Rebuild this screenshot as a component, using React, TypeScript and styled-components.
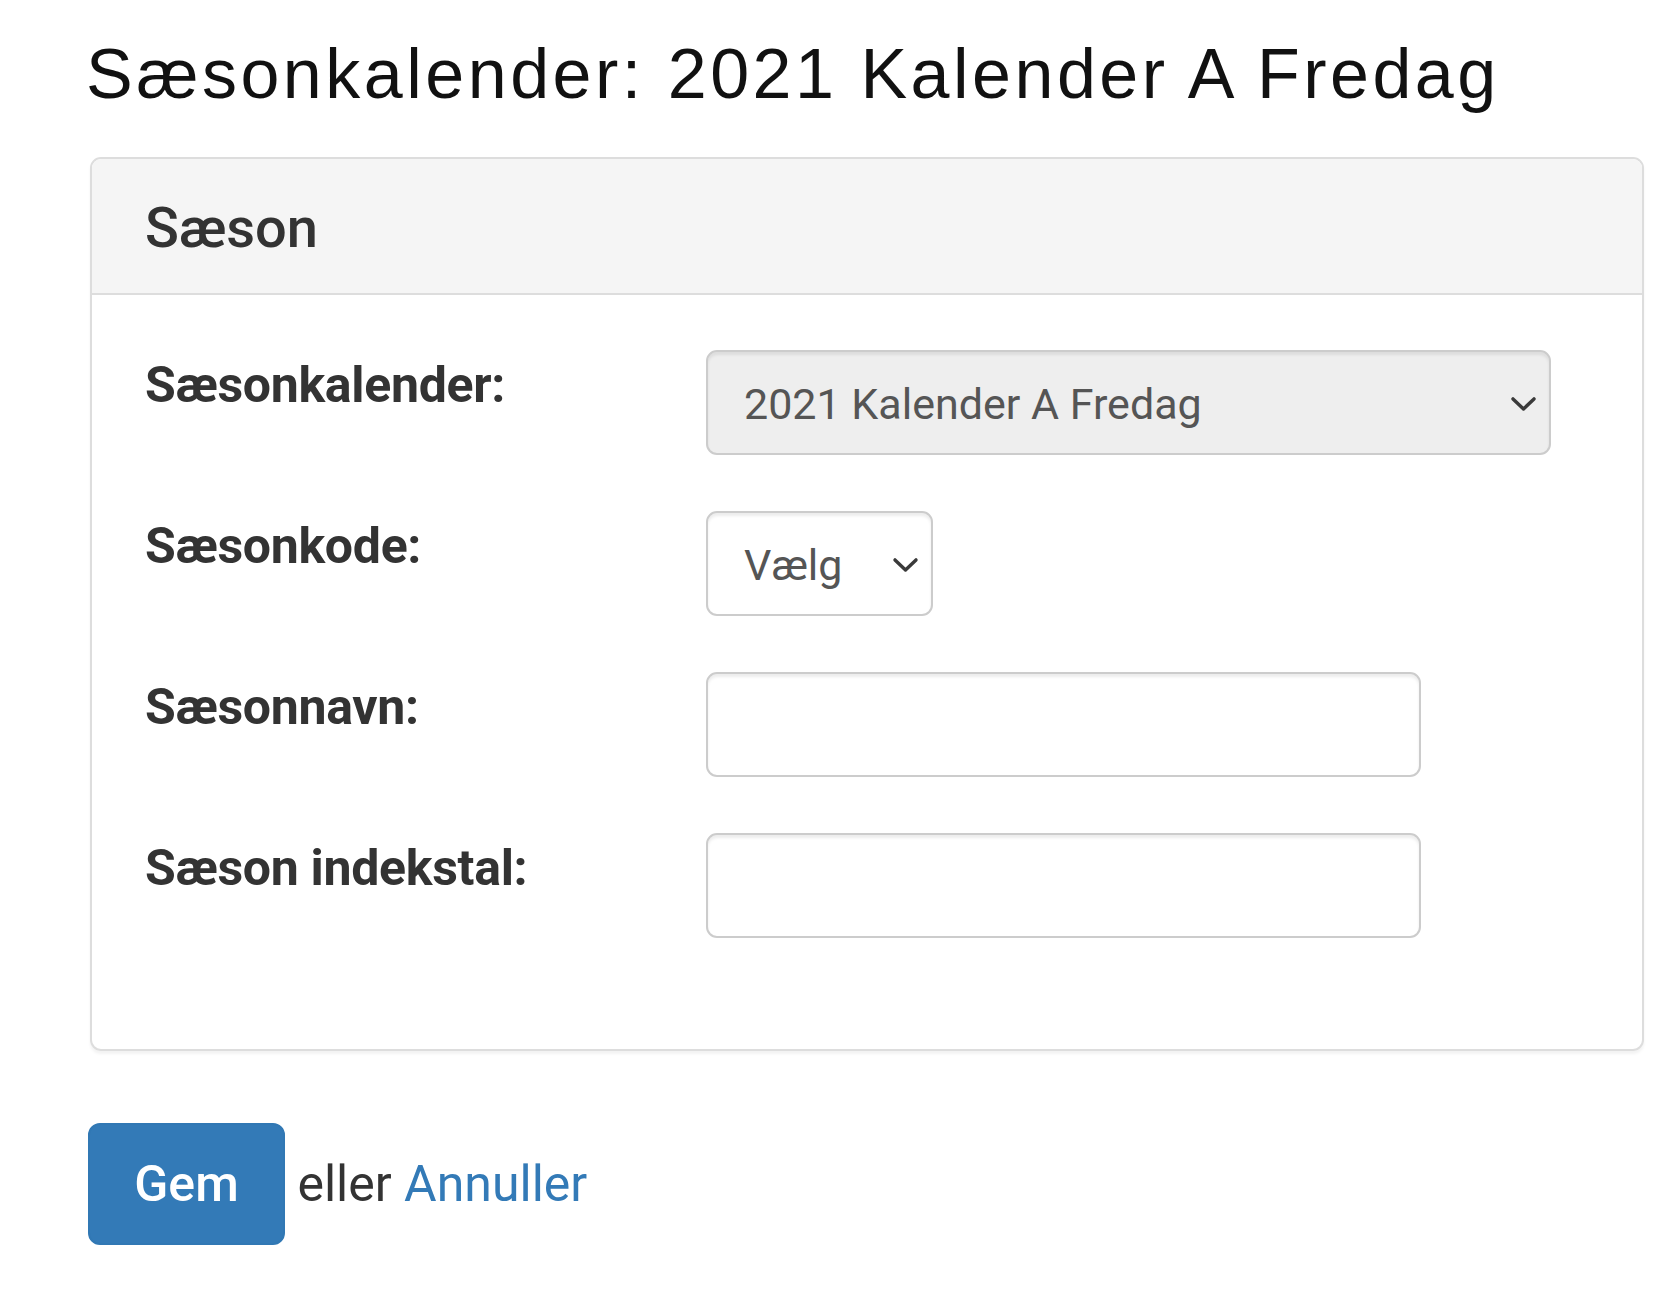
import React from "react"
import styled, { createGlobalStyle } from "styled-components"

const GlobalStyle = createGlobalStyle`
  html, body {
    margin: 0;
    padding: 0;
    background: #fff;
  }
  body {
    font-family: Roboto, "Liberation Sans", Arial, sans-serif;
    color: #333;
  }
`

interface Field {
  label: string
  kind: "select" | "input"
  value?: string
  width: number
  disabled?: boolean
}

const fields: Field[] = [
  {
    label: "Sæsonkalender:",
    kind: "select",
    value: "2021 Kalender A Fredag",
    width: 845,
    disabled: true,
  },
  { label: "Sæsonkode:", kind: "select", value: "Vælg", width: 227 },
  { label: "Sæsonnavn:", kind: "input", width: 715 },
  { label: "Sæson indekstal:", kind: "input", width: 715 },
]

function Chevron() {
  return (
    <ChevronIcon width="27" height="18" viewBox="0 0 27 18" aria-hidden>
      <path
        d="M3 4 L13.5 14 L24 4"
        fill="none"
        stroke="#3a3a3a"
        strokeWidth="3.4"
        strokeLinecap="round"
        strokeLinejoin="round"
      />
    </ChevronIcon>
  )
}

export default function App() {
  return (
    <Page>
      <GlobalStyle />
      <Title>Sæsonkalender: 2021 Kalender A Fredag</Title>
      <Panel>
        <PanelHeading>
          <PanelTitle>Sæson</PanelTitle>
        </PanelHeading>
        <PanelBody>
          {fields.map(field => (
            <FormRow key={field.label}>
              <Label>{field.label}</Label>
              {field.kind === "select" ? (
                <SelectWrap $width={field.width}>
                  <Select disabled={field.disabled} defaultValue={field.value}>
                    <option>{field.value}</option>
                  </Select>
                  <Chevron />
                </SelectWrap>
              ) : (
                <TextInput $width={field.width} type="text" />
              )}
            </FormRow>
          ))}
        </PanelBody>
      </Panel>
      <Actions>
        <SaveButton type="button">Gem</SaveButton> eller{" "}
        <CancelLink href="#">Annuller</CancelLink>
      </Actions>
    </Page>
  )
}

const Page = styled.div`
  padding: 34px 24px 40px 88px;
`

const Title = styled.h1`
  margin: 0 0 43px -2px;
  font-family: "Liberation Sans", Arial, sans-serif;
  font-weight: normal;
  font-size: 70px;
  line-height: 80px;
  letter-spacing: 3.5px;
  color: #111;
`

const Panel = styled.div`
  margin-left: 2px;
  border: 2px solid #ddd;
  border-radius: 11px;
  box-shadow: 0 3px 3px rgba(0, 0, 0, 0.05);
  overflow: hidden;
`

const PanelHeading = styled.div`
  background: #f5f5f5;
  border-bottom: 2px solid #ddd;
  padding: 36px 53px 32px;
`

const PanelTitle = styled.h3`
  margin: 0;
  font-size: 56px;
  font-weight: 500;
  line-height: 66px;
  color: #333;
`

const PanelBody = styled.div`
  padding: 55px 53px 111px;
  display: flex;
  flex-direction: column;
  gap: 56px;
`

const FormRow = styled.div`
  display: grid;
  grid-template-columns: 561px 1fr;
  align-items: start;
`

const Label = styled.label`
  font-size: 50px;
  font-weight: bold;
  line-height: 70px;
  color: #333;
  letter-spacing: -0.3px;
`

const SelectWrap = styled.div<{ $width: number }>`
  position: relative;
  width: ${p => p.$width}px;
  height: 105px;
`

const Select = styled.select`
  appearance: none;
  -webkit-appearance: none;
  box-sizing: border-box;
  width: 100%;
  height: 100%;
  margin: 0;
  padding: 3px 60px 0 36px;
  font-family: Roboto, "Liberation Sans", Arial, sans-serif;
  font-size: 43px;
  color: #555;
  background: #fff;
  border: 2px solid #ccc;
  border-radius: 11px;
  box-shadow: inset 0 3px 3px rgba(0, 0, 0, 0.075);
  opacity: 1;

  &:disabled {
    background: #eee;
    color: #555;
  }
`

const ChevronIcon = styled.svg`
  position: absolute;
  right: 14px;
  top: 50%;
  transform: translateY(-45%);
  pointer-events: none;
`

const TextInput = styled.input<{ $width: number }>`
  box-sizing: border-box;
  width: ${p => p.$width}px;
  height: 105px;
  margin: 0;
  padding: 0 36px;
  font-family: Roboto, "Liberation Sans", Arial, sans-serif;
  font-size: 43px;
  color: #555;
  background: #fff;
  border: 2px solid #ccc;
  border-radius: 11px;
  box-shadow: inset 0 3px 3px rgba(0, 0, 0, 0.075);
`

const Actions = styled.div`
  margin-top: 72px;
  font-size: 50px;
  color: #333;
`

const SaveButton = styled.button`
  width: 197px;
  height: 122px;
  padding: 0;
  font-family: Roboto, "Liberation Sans", Arial, sans-serif;
  font-size: 50px;
  font-weight: 500;
  color: #fff;
  background: #337ab7;
  border: 2px solid #3178b4;
  border-radius: 12px;
  vertical-align: baseline;
  cursor: pointer;
`

const CancelLink = styled.a`
  color: #337ab7;
  text-decoration: none;
`
